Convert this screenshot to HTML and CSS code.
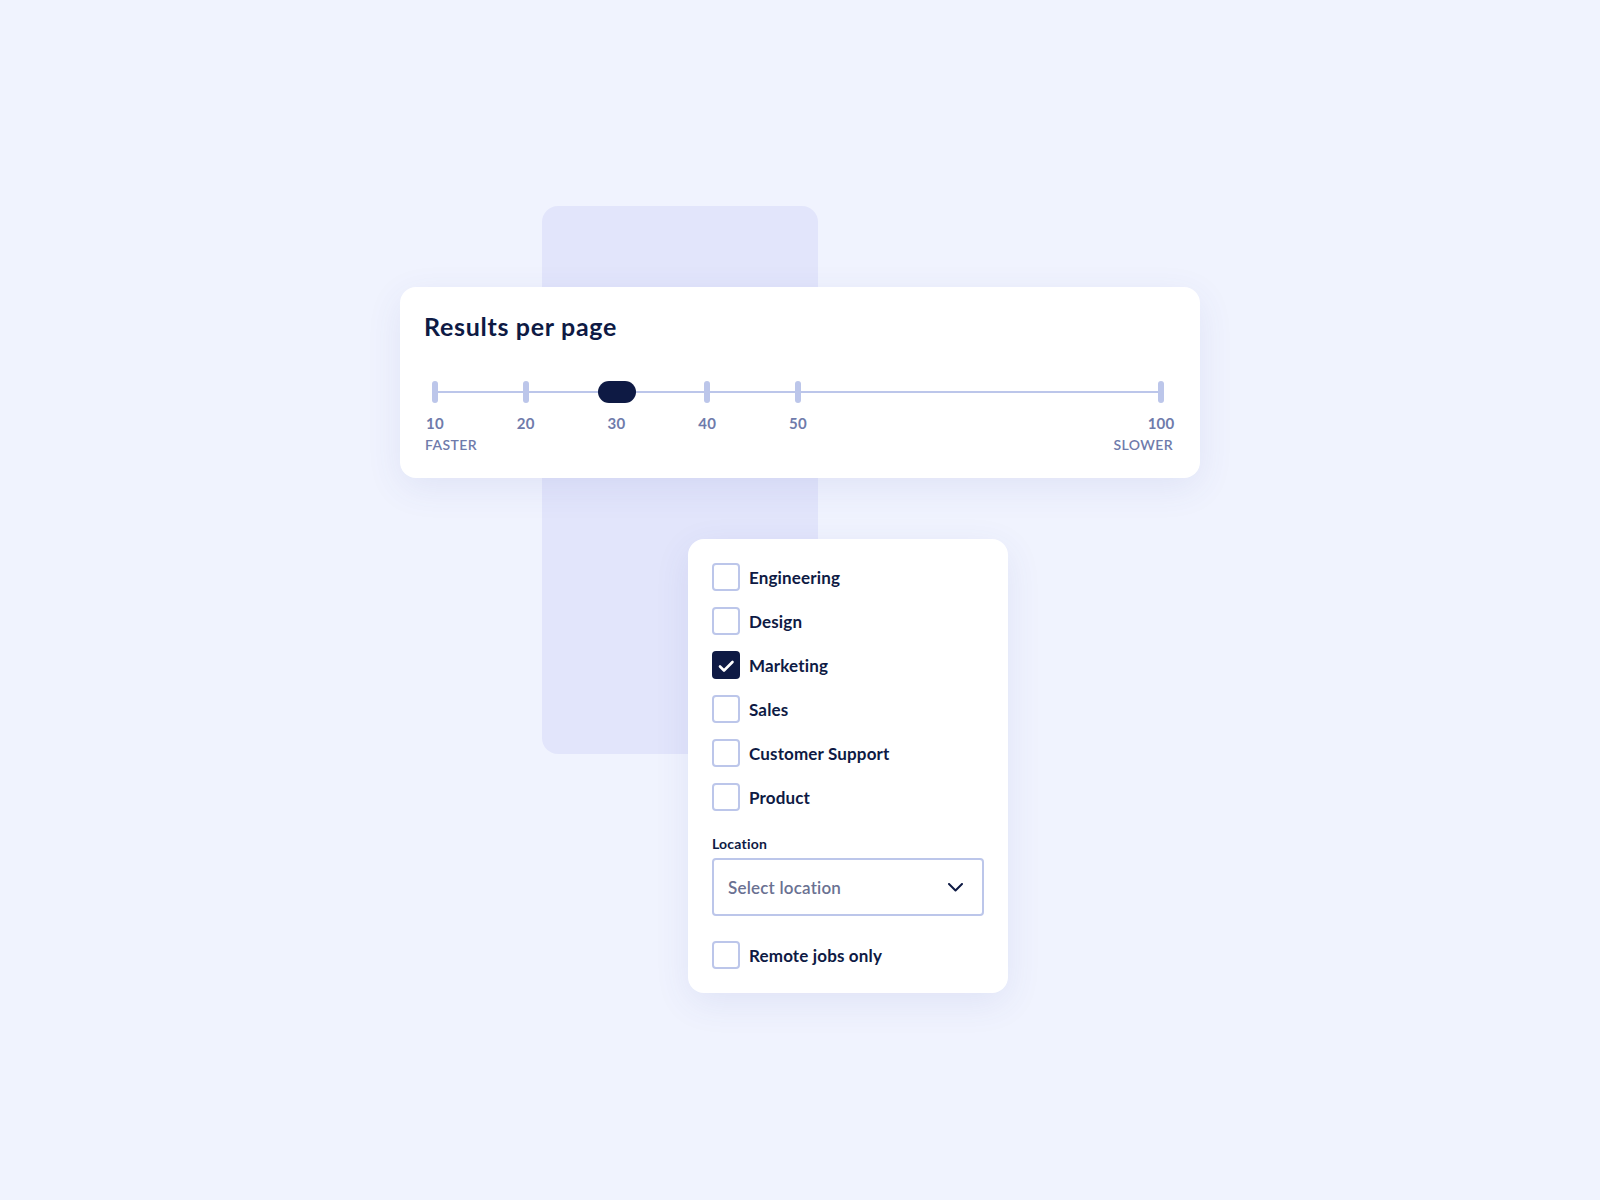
FILE: index.html
```html
<!DOCTYPE html>
<html lang="en">
<head>
    <meta charset="UTF-8">
    <meta name="viewport" content="width=device-width, initial-scale=1.0">
    <title>Job Filters</title>
    <link rel="stylesheet" href="styles.css">
</head>
<body>
    <div class="stage">
        <div class="backdrop"></div>

        <section class="card results">
            <h2 class="card-title">Results per page</h2>

            <div class="slider">
                <div class="track"></div>
                <span class="tick" style="left: 0%"></span>
                <span class="tick" style="left: 12.5%"></span>
                <span class="tick" style="left: 25%"></span>
                <span class="tick" style="left: 37.5%"></span>
                <span class="tick" style="left: 50%"></span>
                <span class="tick" style="left: 100%"></span>
                <span class="thumb" style="left: 25%"></span>
            </div>

            <div class="scale">
                <span class="scale-num" style="left: 0%">10</span>
                <span class="scale-num" style="left: 12.5%">20</span>
                <span class="scale-num" style="left: 25%">30</span>
                <span class="scale-num" style="left: 37.5%">40</span>
                <span class="scale-num" style="left: 50%">50</span>
                <span class="scale-num" style="left: 100%">100</span>
            </div>

            <div class="scale-words">
                <span>FASTER</span>
                <span>SLOWER</span>
            </div>
        </section>

        <section class="card filters">
            <ul class="check-list">
                <li class="check-row"><span class="box"></span>Engineering</li>
                <li class="check-row"><span class="box"></span>Design</li>
                <li class="check-row">
                    <span class="box checked">
                        <svg width="28" height="28" viewBox="0 0 28 28">
                            <path d="M8 15.5 L12 19.5 L20.5 11" fill="none" stroke="#fff" stroke-width="2.6" stroke-linecap="round" stroke-linejoin="round"/>
                        </svg>
                    </span>Marketing
                </li>
                <li class="check-row"><span class="box"></span>Sales</li>
                <li class="check-row"><span class="box"></span>Customer Support</li>
                <li class="check-row"><span class="box"></span>Product</li>
            </ul>

            <label class="field-label">Location</label>
            <div class="select">
                <span>Select location</span>
                <svg width="15" height="9" viewBox="0 0 15 9">
                    <path d="M1 1 L7.5 7.5 L14 1" fill="none" stroke="#0e1a44" stroke-width="2" stroke-linecap="round" stroke-linejoin="round"/>
                </svg>
            </div>

            <div class="check-row remote"><span class="box"></span>Remote jobs only</div>
        </section>
    </div>
</body>
</html>
```

FILE: styles.css
```css
/* General Reset */
* {
    margin: 0;
    padding: 0;
    box-sizing: border-box;
}

body {
    font-family: Lato, "Open Sans", sans-serif;
    background: #f0f3fe;
    color: #0e1a44;
}

.stage {
    position: relative;
    width: 1600px;
    height: 1200px;
    padding-top: 287px;
}

/* lavender panel sitting behind both cards */
.backdrop {
    position: absolute;
    left: 542px;
    top: 206px;
    width: 276px;
    height: 548px;
    background: #e2e5fb;
    border-radius: 16px;
}

.card {
    position: relative;
    background: #fff;
    border-radius: 16px;
    box-shadow: 0 10px 36px rgba(70, 82, 170, 0.09);
    padding: 24px;
}

/* Results per page */
.results {
    width: 800px;
    margin-left: 400px;
}

.card-title {
    font-size: 25px;
    line-height: 30px;
    font-weight: 700;
    letter-spacing: 0.7px;
    color: #0e1a44;
}

.slider {
    position: relative;
    height: 22px;
    margin: 40px 15px 0 11px;
}

.track {
    position: absolute;
    left: 0;
    right: 0;
    top: 10px;
    height: 2px;
    background: #bcc6ea;
}

.tick {
    position: absolute;
    top: 0;
    width: 6px;
    height: 22px;
    margin-left: -3px;
    background: #bcc6ea;
    border-radius: 3px;
}

.thumb {
    position: absolute;
    top: 0;
    width: 38px;
    height: 22px;
    margin-left: -19px;
    background: #0e1a44;
    border-radius: 11px;
}

.scale {
    position: relative;
    height: 18px;
    margin: 11px 15px 0 11px;
}

.scale-num {
    position: absolute;
    top: 0;
    transform: translateX(-50%);
    font-size: 15px;
    line-height: 18px;
    font-weight: 700;
    letter-spacing: 0.2px;
    color: #6f7bab;
}

.scale-words {
    display: flex;
    justify-content: space-between;
    margin-top: 4px;
    padding: 0 3px 0 1px;
    font-size: 14px;
    line-height: 18px;
    font-weight: 600;
    letter-spacing: 0.4px;
    color: #6f7bab;
}

/* Filters */
.filters {
    width: 320px;
    margin: 61px 0 0 688px;
}

.check-list {
    list-style: none;
    display: flex;
    flex-direction: column;
    gap: 16px;
}

.check-row {
    display: flex;
    align-items: center;
    gap: 9px;
    height: 28px;
    font-size: 17px;
    font-weight: 700;
    letter-spacing: 0.15px;
    color: #0e1a44;
}

.box {
    width: 28px;
    height: 28px;
    flex-shrink: 0;
    border: 2px solid #bcc6ea;
    border-radius: 4px;
    background: #fff;
}

.box.checked {
    border: none;
    background: #0e1a44;
}

.box svg {
    display: block;
}

.field-label {
    display: block;
    margin: 24px 0 5px;
    font-size: 14px;
    line-height: 18px;
    font-weight: 700;
    letter-spacing: 0.2px;
    color: #0e1a44;
}

.select {
    display: flex;
    align-items: center;
    justify-content: space-between;
    height: 58px;
    padding: 0 19px 0 14px;
    border: 2px solid #bcc6ea;
    border-radius: 4px;
    font-size: 17px;
    font-weight: 600;
    letter-spacing: 0.2px;
    color: #6a7192;
}

.remote {
    margin-top: 25px;
}
```
